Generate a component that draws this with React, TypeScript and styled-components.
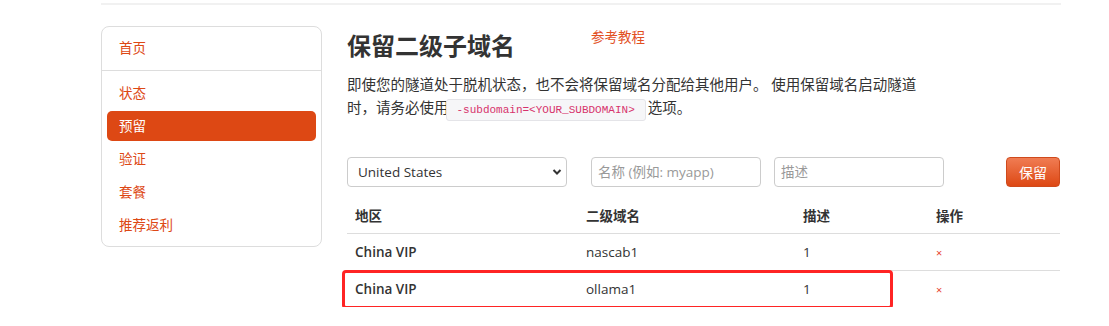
import styled, { createGlobalStyle } from 'styled-components';

const GlobalStyle = createGlobalStyle`
  body {
    margin: 0;
    background: #fff;
    color: #333;
    font-family: 'Open Sans', 'Noto Sans CJK SC', sans-serif;
    font-size: 14px;
  }
`;

const ORANGE = '#dd4814';

const Page = styled.div`
  width: 960px;
  padding: 3px 0 0 101px;
`;

const TopRule = styled.div`
  height: 2px;
  background: #f1f1f1;
`;

const Layout = styled.div`
  display: flex;
  align-items: flex-start;
  gap: 25px;
  margin-top: 21px;
`;

const Sidebar = styled.nav`
  width: 221px;
  box-sizing: border-box;
  border: 1px solid #ddd;
  border-radius: 8px;
`;

const SideHead = styled.div`
  height: 43px;
  line-height: 43px;
  padding-left: 17px;
  border-bottom: 1px solid #ddd;
  font-size: 13.5px;
  color: ${ORANGE};
`;

const SideList = styled.div`
  display: flex;
  flex-direction: column;
  gap: 3px;
  padding: 7px 5px 6px;
`;

const SideItem = styled.div<{ $active?: boolean }>`
  height: 30px;
  line-height: 30px;
  padding-left: 12px;
  border-radius: 5px;
  font-size: 13.5px;
  color: ${(p) => (p.$active ? '#fff' : ORANGE)};
  background: ${(p) => (p.$active ? ORANGE : 'transparent')};
`;

const Main = styled.main`
  width: 713px;
`;

const TitleRow = styled.div`
  display: flex;
  align-items: flex-start;
`;

const Title = styled.h2`
  margin: 5px 0 0;
  font-size: 24px;
  line-height: 30px;
  font-weight: 700;
  color: #333;
`;

const GuideLink = styled.a`
  margin: 2px 0 0 76px;
  font-size: 13.5px;
  line-height: 18px;
  color: #e2501f;
  text-decoration: none;
`;

const Intro = styled.p`
  max-width: 572px;
  margin: 12px 0 0;
  font-size: 14.5px;
  line-height: 23px;
  color: #333;
`;

const Code = styled.code`
  display: inline-block;
  padding: 0 10px;
  margin: 0 2px 0 -3px;
  line-height: 20px;
  font-family: 'Liberation Mono', monospace;
  font-size: 11px;
  color: #d6336c;
  background: #f6f6f8;
  border: 1px solid #e4e4e8;
  border-radius: 3px;
`;

const FormRow = styled.div`
  display: flex;
  align-items: center;
  margin-top: 36px;
`;

const SelectWrap = styled.div`
  position: relative;
  width: 220px;
  margin-right: 24px;
`;

const Select = styled.select`
  appearance: none;
  width: 100%;
  height: 30px;
  box-sizing: border-box;
  padding: 0 10px;
  border: 1px solid #ccc;
  border-radius: 4px;
  background: #fff;
  font-family: inherit;
  font-size: 13.5px;
  color: #333;
`;

const Chevron = styled.svg`
  position: absolute;
  right: 5px;
  top: 11px;
  pointer-events: none;
`;

const Input = styled.input<{ $gap?: number }>`
  width: 170px;
  height: 30px;
  box-sizing: border-box;
  margin-right: ${(p) => p.$gap ?? 0}px;
  padding: 0 6px;
  border: 1px solid #ccc;
  border-radius: 4px;
  font-family: inherit;
  font-size: 13.5px;
  color: #333;
  &::placeholder {
    color: #999;
  }
`;

const SaveButton = styled.button`
  margin-left: auto;
  width: 54px;
  height: 30px;
  border: 1px solid #cf4a1c;
  border-radius: 4px;
  background: linear-gradient(#f07c53, #dd4814);
  color: #fff;
  font-family: inherit;
  font-size: 14px;
`;

const Table = styled.div`
  margin-top: 10px;
`;

const Row = styled.div<{ $head?: boolean; $last?: boolean }>`
  position: relative;
  display: grid;
  grid-template-columns: 231px 217px 133px 132px;
  height: 36px;
  align-items: center;
  border-bottom: ${(p) => (p.$last ? 'none' : '1px solid #ddd')};
  font-size: 13.5px;
  font-weight: ${(p) => (p.$head ? 700 : 400)};
`;

const Cell = styled.div<{ $strong?: boolean }>`
  padding-left: 8px;
  font-weight: ${(p) => (p.$strong ? 600 : 'inherit')};
  color: #333;
`;

const Remove = styled.span`
  padding-left: 8px;
  font-size: 11px;
  color: #e8412c;
`;

const Highlight = styled.div`
  position: absolute;
  left: -5px;
  top: -1px;
  width: 551px;
  height: 39px;
  box-sizing: border-box;
  border: 3px solid #ff2424;
  border-radius: 4px;
  pointer-events: none;
`;

const navItems = ['状态', '预留', '验证', '套餐', '推荐返利'];

const rows = [
  { region: 'China VIP', sub: 'nascab1', desc: '1' },
  { region: 'China VIP', sub: 'ollama1', desc: '1' },
];

export default function App() {
  return (
    <>
      <GlobalStyle />
      <Page>
        <TopRule />
        <Layout>
          <Sidebar>
            <SideHead>首页</SideHead>
            <SideList>
              {navItems.map((item) => (
                <SideItem key={item} $active={item === '预留'}>
                  {item}
                </SideItem>
              ))}
            </SideList>
          </Sidebar>
          <Main>
            <TitleRow>
              <Title>保留二级子域名</Title>
              <GuideLink href="#">参考教程</GuideLink>
            </TitleRow>
            <Intro>
              即使您的隧道处于脱机状态，也不会将保留域名分配给其他用户。 使用保留域名启动隧道时，请务必使用
              <Code>-subdomain=&lt;YOUR_SUBDOMAIN&gt;</Code>选项。
            </Intro>
            <FormRow>
              <SelectWrap>
                <Select defaultValue="us">
                  <option value="us">United States</option>
                </Select>
                <Chevron width="10" height="8" viewBox="0 0 10 8">
                  <path d="M1.5 2l3.5 3.5L8.5 2" fill="none" stroke="#333" strokeWidth="2" />
                </Chevron>
              </SelectWrap>
              <Input $gap={13} placeholder="名称 (例如: myapp)" />
              <Input placeholder="描述" />
              <SaveButton>保留</SaveButton>
            </FormRow>
            <Table>
              <Row $head>
                <Cell>地区</Cell>
                <Cell>二级域名</Cell>
                <Cell>描述</Cell>
                <Cell>操作</Cell>
              </Row>
              {rows.map((r, i) => (
                <Row key={r.sub} $last={i === rows.length - 1}>
                  <Cell $strong>{r.region}</Cell>
                  <Cell>{r.sub}</Cell>
                  <Cell>{r.desc}</Cell>
                  <Remove>×</Remove>
                  {i === rows.length - 1 && <Highlight />}
                </Row>
              ))}
            </Table>
          </Main>
        </Layout>
      </Page>
    </>
  );
}
